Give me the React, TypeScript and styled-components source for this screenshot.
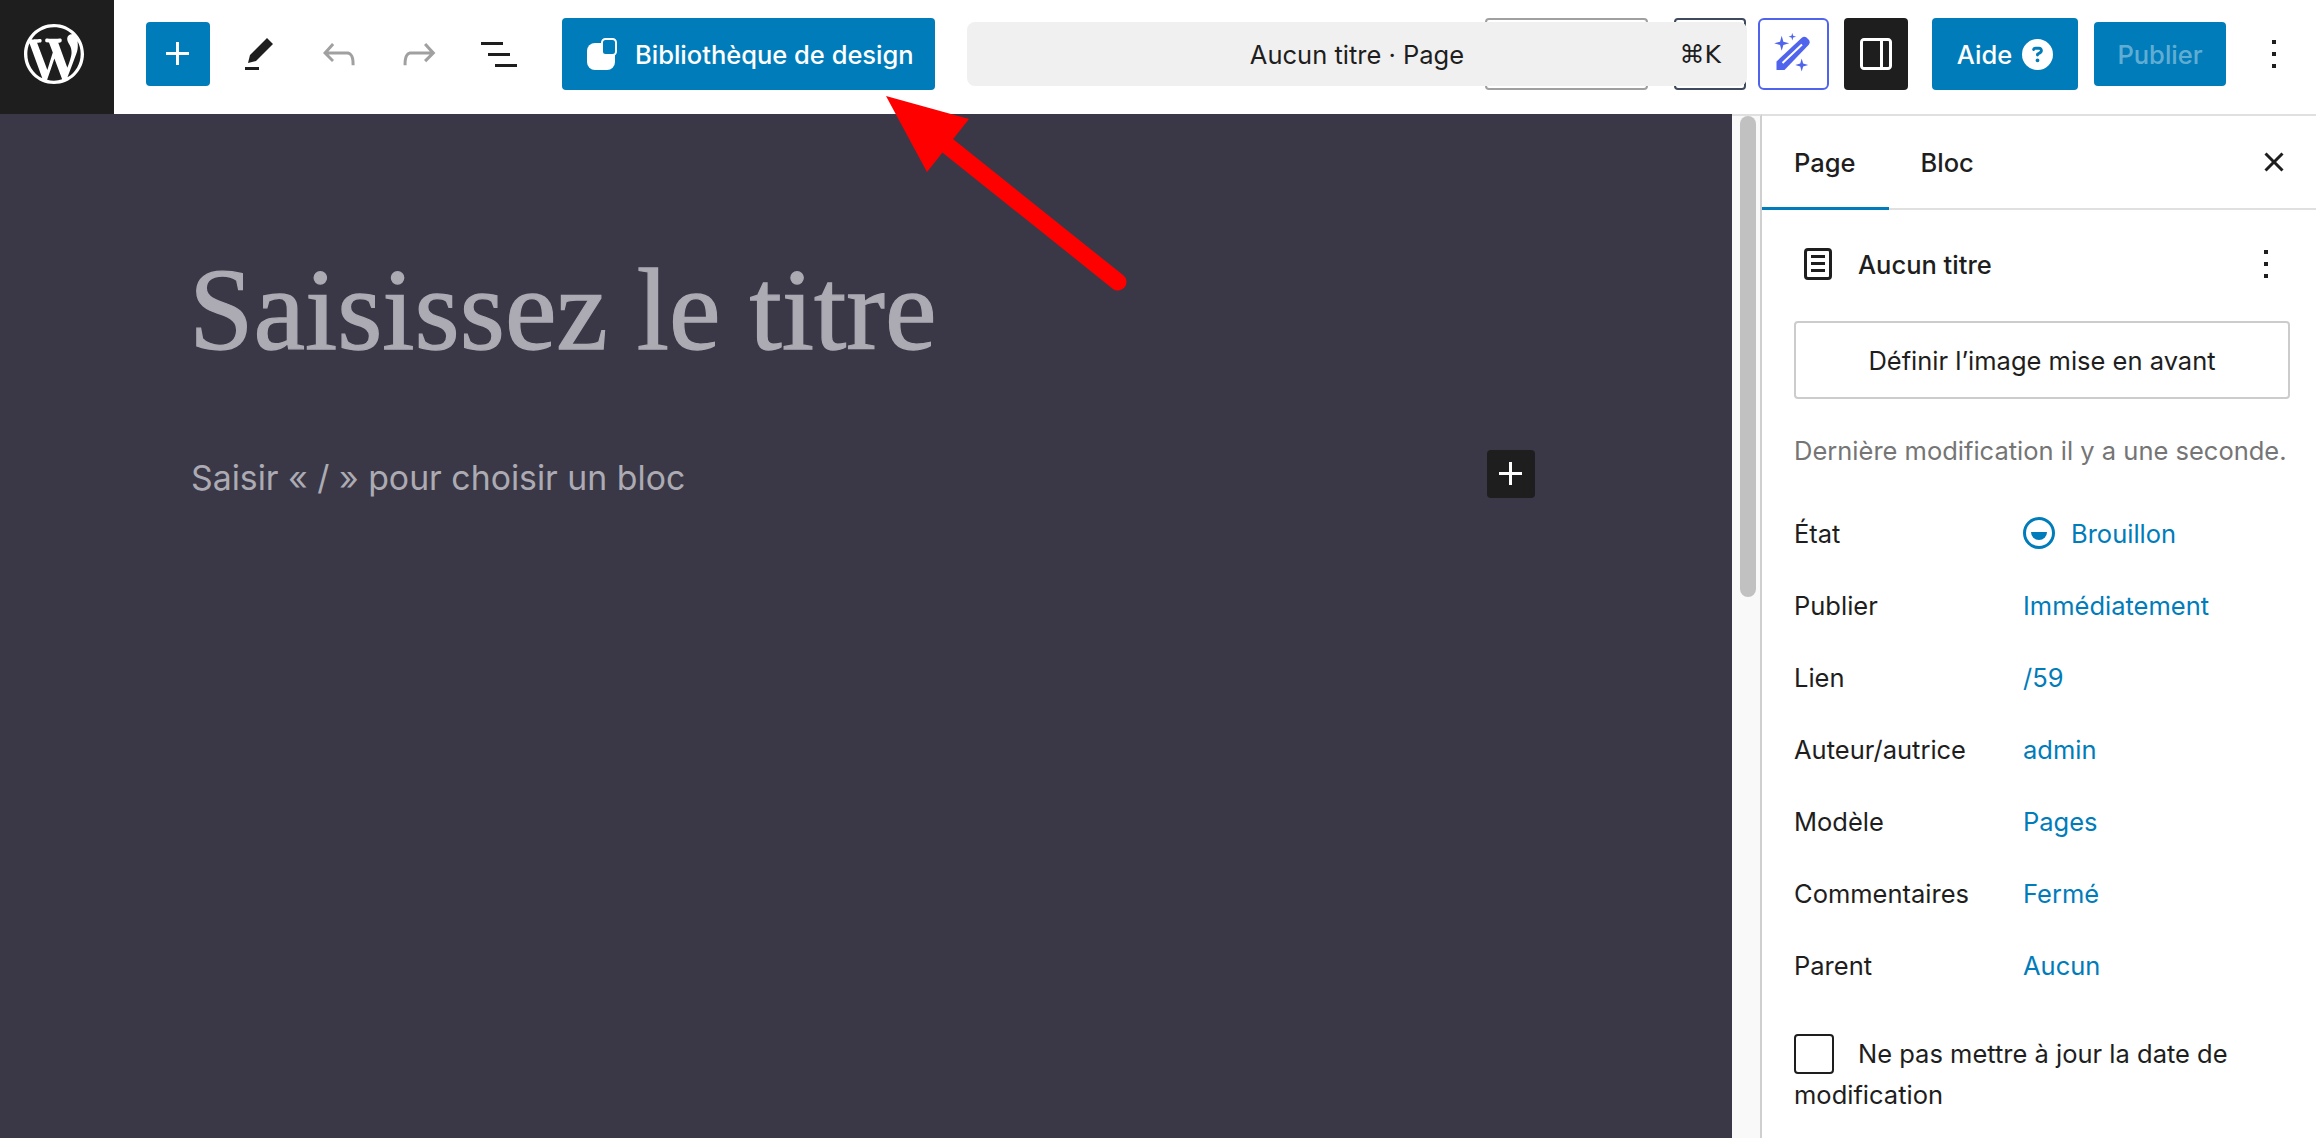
import styled, { createGlobalStyle } from "styled-components";
import { FaCircleQuestion } from "react-icons/fa6";

const GlobalStyle = createGlobalStyle`
    html, body {
        margin: 0;
        padding: 0;
        background: #fff;
    }
    body {
        font-family: Inter, "Liberation Sans", sans-serif;
        color: #1e1e1e;
    }
`;

const Page = styled.div`
    position: relative;
    width: 2316px;
    height: 1138px;
    overflow: hidden;
    display: flex;
    flex-direction: column;
`;

const Header = styled.header`
    height: 114px;
    box-sizing: border-box;
    padding-bottom: 6px;
    display: flex;
    align-items: center;
    flex-shrink: 0;
`;

const LogoTile = styled.div`
    align-self: flex-start;
    width: 114px;
    height: 114px;
    margin-right: 32px;
    padding: 0 6px 6px 0;
    box-sizing: border-box;
    background: #1e1e1e;
    display: flex;
    align-items: center;
    justify-content: center;
    color: #fff;
`;

const InserterButton = styled.div`
    width: 64px;
    height: 64px;
    background: #007cba;
    border-radius: 4px;
    color: #fff;
    display: flex;
    align-items: center;
    justify-content: center;
    margin-right: 9px;
`;

const ToolButton = styled.div<{ $muted?: boolean }>`
    width: 80px;
    height: 48px;
    display: flex;
    align-items: center;
    justify-content: center;
    color: ${(p) => (p.$muted ? "#a0a0a0" : "#1e1e1e")};
`;

const LibraryButton = styled.div`
    width: 373px;
    height: 72px;
    margin-left: 23px;
    margin-right: 32px;
    background: #007cba;
    border-radius: 4px;
    color: #fff;
    font-size: 25.5px;
    font-weight: 500;
    display: flex;
    align-items: center;
    padding-left: 25px;
    gap: 18px;
    box-sizing: border-box;
`;

const CommandSlot = styled.div`
    position: relative;
    width: 780px;
    height: 64px;
    margin-right: 11px;
`;

const GhostButton = styled.div<{ $left: number; $width: number; $tone: string }>`
    position: absolute;
    top: -4px;
    left: ${(p) => p.$left}px;
    width: ${(p) => p.$width}px;
    height: 72px;
    box-sizing: border-box;
    border: 2px solid ${(p) => p.$tone};
    border-radius: 4px;
`;

const CommandBar = styled.div`
    position: absolute;
    inset: 0;
    background: #f0f0f0;
    border-radius: 8px;
    display: flex;
    align-items: center;
    justify-content: center;
    font-size: 25.5px;
`;

const Shortcut = styled.span`
    position: absolute;
    right: 26px;
    top: 50%;
    transform: translateY(-50%);
    font-size: 25px;
    font-family: "DejaVu Sans", Inter, sans-serif;
`;

const MagicButton = styled.div`
    width: 71px;
    height: 72px;
    box-sizing: border-box;
    border: 2px solid #4f63ec;
    border-radius: 6px;
    color: #4f63ec;
    display: flex;
    align-items: center;
    justify-content: center;
    margin-right: 15px;
`;

const ToggleButton = styled.div`
    width: 64px;
    height: 72px;
    background: #1e1e1e;
    border-radius: 4px;
    color: #fff;
    display: flex;
    align-items: center;
    justify-content: center;
    margin-right: 24px;
`;

const HelpButton = styled.div`
    width: 146px;
    height: 72px;
    background: #007cba;
    border-radius: 4px;
    color: #fff;
    font-size: 25.5px;
    font-weight: 500;
    display: flex;
    align-items: center;
    justify-content: center;
    gap: 10px;
    margin-right: 16px;
`;

const PublishButton = styled.div`
    width: 132px;
    height: 64px;
    background: #007cba;
    border-radius: 4px;
    color: rgba(255, 255, 255, 0.4);
    font-size: 25.5px;
    font-weight: 500;
    display: flex;
    align-items: center;
    justify-content: center;
    margin-right: 24px;
`;

const Body = styled.div`
    flex: 1;
    display: flex;
    min-height: 0;
`;

const Editor = styled.main`
    flex: 1;
    background: #3a3846;
    color: #acabb3;
    padding-left: 191px;
    box-sizing: border-box;
`;

const TitleField = styled.h1`
    margin: 131px 0 0 -2px;
    font-family: "Liberation Serif", serif;
    font-weight: 400;
    font-size: 116px;
    line-height: 130px;
    -webkit-text-stroke: 1.3px #acabb3;
`;

const BlockRow = styled.div`
    width: 1344px;
    margin-top: 71px;
    display: flex;
    align-items: center;
    justify-content: space-between;
    font-size: 33.8px;
    line-height: 48px;
`;

const Placeholder = styled.span`
    padding-top: 8px;
`;

const BlockAdd = styled.div`
    width: 48px;
    height: 48px;
    background: #1e1e1e;
    border-radius: 4px;
    color: #fff;
    display: flex;
    align-items: center;
    justify-content: center;
`;

const Gutter = styled.div`
    width: 30px;
    box-sizing: border-box;
    background: #f9f9f9;
    border-top: 2px solid #e0e0e0;
    border-right: 2px solid #cfcfcf;
    padding-left: 8px;
`;

const Thumb = styled.div`
    width: 16px;
    height: 481px;
    border-radius: 8px;
    background: #c1c1c1;
`;

const Sidebar = styled.aside`
    width: 554px;
    box-sizing: border-box;
    border-top: 2px solid #e0e0e0;
    overflow: hidden;
    background: #fff;
    font-size: 25.5px;
`;

const Tabs = styled.div`
    height: 94px;
    box-sizing: border-box;
    border-bottom: 2px solid #e0e0e0;
    display: flex;
    align-items: stretch;
    position: relative;
    padding-right: 18px;
`;

const Tab = styled.div<{ $active?: boolean }>`
    padding: 2px 33px 0 32px;
    display: flex;
    align-items: center;
    font-weight: 500;
    margin-bottom: -2px;
    border-bottom: 3px solid ${(p) => (p.$active ? "#007cba" : "transparent")};
`;

const TabClose = styled.div`
    margin-left: auto;
    display: flex;
    align-items: center;
`;

const Panel = styled.div`
    padding: 30px 26px 0 32px;
`;

const DocRow = styled.div`
    height: 48px;
    display: flex;
    align-items: center;
    font-weight: 500;
    gap: 16px;
`;

const DocMenu = styled.span`
    margin-left: auto;
    display: flex;
`;

const OutlineButton = styled.div`
    height: 78px;
    margin-top: 33px;
    box-sizing: border-box;
    border: 2px solid #ccc;
    border-radius: 4px;
    display: flex;
    align-items: center;
    justify-content: center;
`;

const Muted = styled.div`
    margin-top: 32px;
    line-height: 40px;
    color: #757575;
    white-space: nowrap;
`;

const Rows = styled.div`
    margin-top: 26px;
`;

const Row = styled.div`
    height: 72px;
    display: grid;
    grid-template-columns: 229px 1fr;
    align-items: center;
`;

const Value = styled.span`
    color: #007cba;
    display: flex;
    align-items: center;
    gap: 16px;
`;

const CheckLine = styled.div`
    margin-top: 32px;
    line-height: 41px;
`;

const Box = styled.span`
    display: inline-block;
    width: 40px;
    height: 40px;
    box-sizing: border-box;
    border: 2px solid #1e1e1e;
    border-radius: 4px;
    vertical-align: middle;
    margin: -4px 24px 0 0;
`;

const ArrowOverlay = styled.svg`
    position: absolute;
    left: 860px;
    top: 85px;
    pointer-events: none;
`;

const IconPath = ({ d, size = 48 }: { d: string; size?: number }) => (
    <svg width={size} height={size} viewBox="0 0 24 24" fill="currentColor">
        <path d={d} fillRule="evenodd" clipRule="evenodd" />
    </svg>
);

const plus = "M11 12.5V17.5H12.5V12.5H17.5V11H12.5V6H11V11H6V12.5H11Z";
const pencil = "m19 7-3-3-8.5 8.5-1 4 4-1L19 7Zm-7 11.5H5V20h7v-1.5Z";
const undo =
    "M18.3 11.7c-.6-.6-1.4-.9-2.3-.9H6.7l2.9-3.3-1.1-1-4.5 5L8.5 16l1-1-2.7-2.7H16c.5 0 .9.2 1.3.5 1 1 1 3.4 1 4.5v.3h1.5v-.2c0-1.5 0-4.3-1.5-5.7z";
const redo =
    "M15.6 6.5l-1.1 1 2.9 3.3H8c-.9 0-1.7.3-2.3.9-1.4 1.5-1.4 4.2-1.4 5.7v.2h1.5v-.3c0-1.1 0-3.5 1-4.5.3-.3.7-.5 1.3-.5h9.2L14.5 15l1.1 1.1 4.6-4.6-4.6-5z";
const listView = "M3 6h11v1.5H3V6Zm3.5 5.5h11V13h-11v-1.5ZM21 17H10v1.5h11V17Z";
const sideToggle =
    "M4 6v12c0 1.1.9 2 2 2h12c1.1 0 2-.9 2-2V6c0-1.1-.9-2-2-2H6c-1.1 0-2 .9-2 2zm1.5 12V6c0-.3.2-.5.5-.5h8v13H6c-.3 0-.5-.2-.5-.5zm13 0c0 .3-.2.5-.5.5h-2.5v-13H18c.3 0 .5.2.5.5v12z";
const kebab = "M13 19h-2v-2h2v2zm0-6h-2v-2h2v2zm0-6h-2V5h2v2z";
const closeSmall =
    "M12 13.06l3.712 3.713 1.061-1.06L13.061 12l3.712-3.712-1.06-1.06L12 10.938 8.288 7.227l-1.061 1.06L10.939 12l-3.712 3.712 1.06 1.061L12 13.061z";
const pageDoc =
    "M15.5 7.5h-7V9h7V7.5Zm-7 3.5h7v1.5h-7V11Zm7 3.5h-7V16h7v-1.5ZM17 4H7a2 2 0 0 0-2 2v12a2 2 0 0 0 2 2h10a2 2 0 0 0 2-2V6a2 2 0 0 0-2-2ZM7 5.5h10a.5.5 0 0 1 .5.5v12a.5.5 0 0 1-.5.5H7a.5.5 0 0 1-.5-.5V6a.5.5 0 0 1 .5-.5Z";

function WordPressLogo() {
    return (
        <svg width="60" height="60" viewBox="0 0 20 20" fill="currentColor">
            <path d="M20 10c0-5.51-4.49-10-10-10C4.48 0 0 4.49 0 10c0 5.52 4.48 10 10 10 5.51 0 10-4.48 10-10zM7.78 15.37L4.37 6.22c.55-.02 1.17-.08 1.17-.08.5-.06.44-1.13-.06-1.11 0 0-1.45.11-2.37.11-.18 0-.37 0-.58-.01C4.12 2.69 6.87 1.11 10 1.11c2.33 0 4.45.87 6.05 2.34-.68-.11-1.65.39-1.65 1.58 0 .74.45 1.36.9 2.1.35.61.55 1.36.55 2.46 0 1.49-1.4 5-1.4 5l-3.03-8.37c.54-.02.82-.17.82-.17.5-.05.44-1.25-.06-1.22 0 0-1.44.12-2.38.12-.87 0-2.33-.12-2.33-.12-.5-.03-.56 1.2-.06 1.22l.92.08 1.26 3.41zM17.41 10c.24-.64.74-1.87.43-4.25.7 1.29 1.05 2.71 1.05 4.25 0 3.29-1.73 6.24-4.4 7.78.97-2.59 1.94-5.2 2.92-7.78zM6.1 18.09C3.12 16.65 1.11 13.53 1.11 10c0-1.3.23-2.48.72-3.59C3.25 10.3 4.67 14.2 6.1 18.09zm4.03-6.63l2.58 6.98c-.86.29-1.76.45-2.71.45-.79 0-1.57-.11-2.29-.33.81-2.38 1.62-4.74 2.42-7.1z" />
        </svg>
    );
}

function LibraryIcon() {
    return (
        <svg width="30" height="32" viewBox="0 0 30 32">
            <rect x="0" y="5" width="28" height="27" rx="8" fill="#fff" />
            <rect x="15" y="1" width="14" height="16" rx="3.5" fill="#007cba" stroke="#fff" strokeWidth="2" />
        </svg>
    );
}

function star(cx: number, cy: number, r: number) {
    const k = r * 0.22;
    return `M${cx} ${cy - r}L${cx + k} ${cy - k}L${cx + r} ${cy}L${cx + k} ${cy + k}L${cx} ${cy + r}L${cx - k} ${cy + k}L${cx - r} ${cy}L${cx - k} ${cy - k}Z`;
}

function MagicIcon() {
    return (
        <svg width="48" height="48" viewBox="0 0 48 48" fill="currentColor">
            <path d={star(11.7, 13.3, 7.5)} />
            <path d={star(22.3, 6.7, 3.8)} />
            <path d={star(31.7, 35, 6.5)} />
            <path d="M6.5 31.5 L31.5 8 Q34 6 36.5 7.5 L39 10 Q40.5 12.5 38.5 15 L14.5 40 L6.5 40 Z" />
            <path d="M12.5 33 L32 14.5" stroke="#fff" strokeWidth="2" fill="none" />
        </svg>
    );
}

function StatusIcon() {
    return (
        <svg width="32" height="32" viewBox="0 0 32 32">
            <circle cx="16" cy="16" r="14.5" fill="none" stroke="#007cba" strokeWidth="3" />
            <path d="M8 15h16a8 8 0 0 1-16 0Z" fill="#007cba" />
        </svg>
    );
}

const rows = [
    { label: "Publier", value: "Immédiatement" },
    { label: "Lien", value: "/59" },
    { label: "Auteur/autrice", value: "admin" },
    { label: "Modèle", value: "Pages" },
    { label: "Commentaires", value: "Fermé" },
    { label: "Parent", value: "Aucun" },
];

export default function App() {
    return (
        <Page>
            <GlobalStyle />
            <Header>
                <LogoTile>
                    <WordPressLogo />
                </LogoTile>
                <InserterButton>
                    <IconPath d={plus} />
                </InserterButton>
                <ToolButton>
                    <IconPath d={pencil} />
                </ToolButton>
                <ToolButton $muted>
                    <IconPath d={undo} />
                </ToolButton>
                <ToolButton $muted>
                    <IconPath d={redo} />
                </ToolButton>
                <ToolButton>
                    <IconPath d={listView} />
                </ToolButton>
                <LibraryButton>
                    <LibraryIcon />
                    Bibliothèque de design
                </LibraryButton>
                <CommandSlot>
                    <GhostButton $left={518} $width={163} $tone="#a0a0a0" />
                    <GhostButton $left={707} $width={72} $tone="#3f4a5f" />
                    <CommandBar>
                        Aucun titre · Page
                        <Shortcut>⌘K</Shortcut>
                    </CommandBar>
                </CommandSlot>
                <MagicButton>
                    <MagicIcon />
                </MagicButton>
                <ToggleButton>
                    <IconPath d={sideToggle} />
                </ToggleButton>
                <HelpButton>
                    Aide
                    <FaCircleQuestion size={31} />
                </HelpButton>
                <PublishButton>Publier</PublishButton>
                <IconPath d={kebab} />
            </Header>
            <Body>
                <Editor>
                    <TitleField>Saisissez le titre</TitleField>
                    <BlockRow>
                        <Placeholder>Saisir « / » pour choisir un bloc</Placeholder>
                        <BlockAdd>
                            <IconPath d={plus} />
                        </BlockAdd>
                    </BlockRow>
                </Editor>
                <Gutter>
                    <Thumb />
                </Gutter>
                <Sidebar>
                    <Tabs>
                        <Tab $active>Page</Tab>
                        <Tab>Bloc</Tab>
                        <TabClose>
                            <IconPath d={closeSmall} />
                        </TabClose>
                    </Tabs>
                    <Panel>
                        <DocRow>
                            <IconPath d={pageDoc} />
                            Aucun titre
                            <DocMenu>
                                <IconPath d={kebab} />
                            </DocMenu>
                        </DocRow>
                        <OutlineButton>Définir l’image mise en avant</OutlineButton>
                        <Muted>Dernière modification il y a une seconde.</Muted>
                        <Rows>
                            <Row>
                                <span>État</span>
                                <Value>
                                    <StatusIcon />
                                    Brouillon
                                </Value>
                            </Row>
                            {rows.map((r) => (
                                <Row key={r.label}>
                                    <span>{r.label}</span>
                                    <Value>{r.value}</Value>
                                </Row>
                            ))}
                        </Rows>
                        <CheckLine>
                            <Box />
                            Ne pas mettre à jour la date de modification
                        </CheckLine>
                    </Panel>
                </Sidebar>
            </Body>
            <ArrowOverlay width="280" height="210" viewBox="860 85 280 210">
                <line x1="948" y1="146" x2="1118" y2="282" stroke="#ff0000" strokeWidth="17" strokeLinecap="round" />
                <polygon points="886,96 969,119 927,172" fill="#ff0000" />
            </ArrowOverlay>
        </Page>
    );
}
